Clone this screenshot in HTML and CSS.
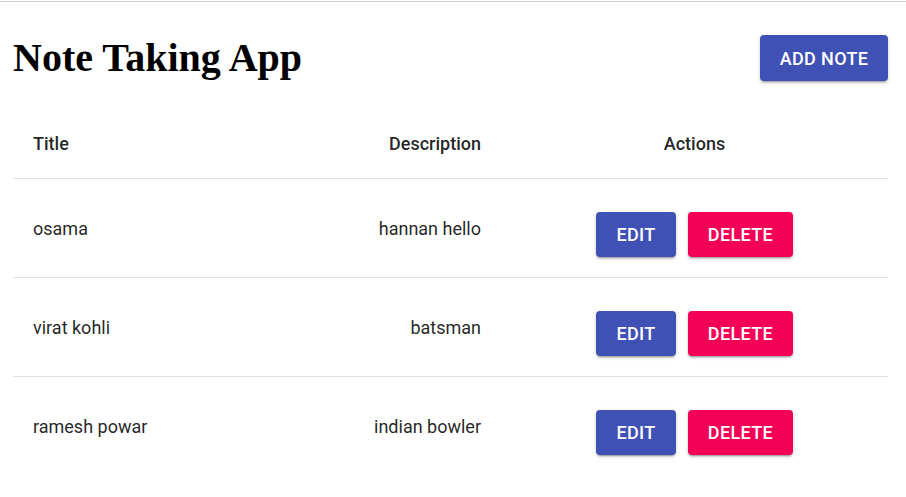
FILE: index.html
```html
<!DOCTYPE html>
<html>
<head>
<meta charset="utf-8">
<link rel="stylesheet" href="styles.css">
</head>
<body>
<div class="topline"></div>
<div class="page">
  <header class="header">
    <h1 class="title">Note Taking App</h1>
    <button class="btn btn-primary btn-add">Add Note</button>
  </header>
  <table class="notes">
    <thead>
      <tr>
        <th class="col-title">Title</th>
        <th class="col-desc">Description</th>
        <th class="col-actions">Actions</th>
      </tr>
    </thead>
    <tbody>
      <tr>
        <td class="col-title">osama</td>
        <td class="col-desc">hannan hello</td>
        <td class="col-actions"><div class="actions"><button class="btn btn-primary btn-edit">Edit</button><button class="btn btn-secondary btn-delete">Delete</button></div></td>
      </tr>
      <tr>
        <td class="col-title">virat kohli</td>
        <td class="col-desc">batsman</td>
        <td class="col-actions"><div class="actions"><button class="btn btn-primary btn-edit">Edit</button><button class="btn btn-secondary btn-delete">Delete</button></div></td>
      </tr>
      <tr class="last">
        <td class="col-title">ramesh powar</td>
        <td class="col-desc">indian bowler</td>
        <td class="col-actions"><div class="actions"><button class="btn btn-primary btn-edit">Edit</button><button class="btn btn-secondary btn-delete">Delete</button></div></td>
      </tr>
    </tbody>
  </table>
</div>
</body>
</html>
```

FILE: styles.css
```css
html, body {
  margin: 0;
  padding: 0;
  background: #fff;
}

.topline {
  margin-top: 1px;
  height: 1px;
  background: #d0d0d0;
}

.page {
  padding: 0 18px 0 13px;
}

.header {
  display: flex;
  justify-content: space-between;
  align-items: center;
  margin-top: 33px;
  height: 46px;
}

.title {
  margin: 0;
  font-family: "Liberation Serif", "Times New Roman", serif;
  font-weight: bold;
  font-size: 40px;
  color: #000;
  line-height: 46px;
}

.btn {
  font-family: Roboto, "Noto Sans", sans-serif;
  font-weight: 500;
  text-transform: uppercase;
  color: #fff;
  border: none;
  border-radius: 4px;
  box-shadow: 0 3px 1px -2px rgba(0,0,0,0.2), 0 2px 2px 0 rgba(0,0,0,0.14), 0 1px 5px 0 rgba(0,0,0,0.12);
  cursor: pointer;
  padding: 0;
  letter-spacing: 0.02em;
}

.btn-primary {
  background: #3f51b5;
}

.btn-secondary {
  background: #f50057;
}

.btn-add {
  width: 128px;
  height: 46px;
  font-size: 18px;
}

.notes {
  margin-top: 27px;
  width: 875px;
  border-collapse: collapse;
  font-family: Roboto, "Noto Sans", sans-serif;
  color: rgba(0,0,0,0.87);
  font-size: 18px;
}

.notes th {
  font-weight: 500;
  height: 70px;
  padding: 0 20px;
  border-bottom: 1px solid #e0e0e0;
  vertical-align: middle;
}

.notes td {
  font-weight: 400;
  height: 98px;
  padding: 0 20px;
  border-bottom: 1px solid #e0e0e0;
  vertical-align: middle;
}

.notes tr.last td {
  border-bottom: none;
}

.col-title {
  text-align: left;
}

.col-desc {
  text-align: right;
}

.col-actions {
  text-align: center;
  width: 347px;
}

.actions {
  display: flex;
  justify-content: center;
  gap: 12px;
  margin-top: 12px;
}

.btn-edit {
  width: 80px;
  height: 45px;
  font-size: 18px;
}

.btn-delete {
  width: 105px;
  height: 45px;
  font-size: 18px;
}
```
